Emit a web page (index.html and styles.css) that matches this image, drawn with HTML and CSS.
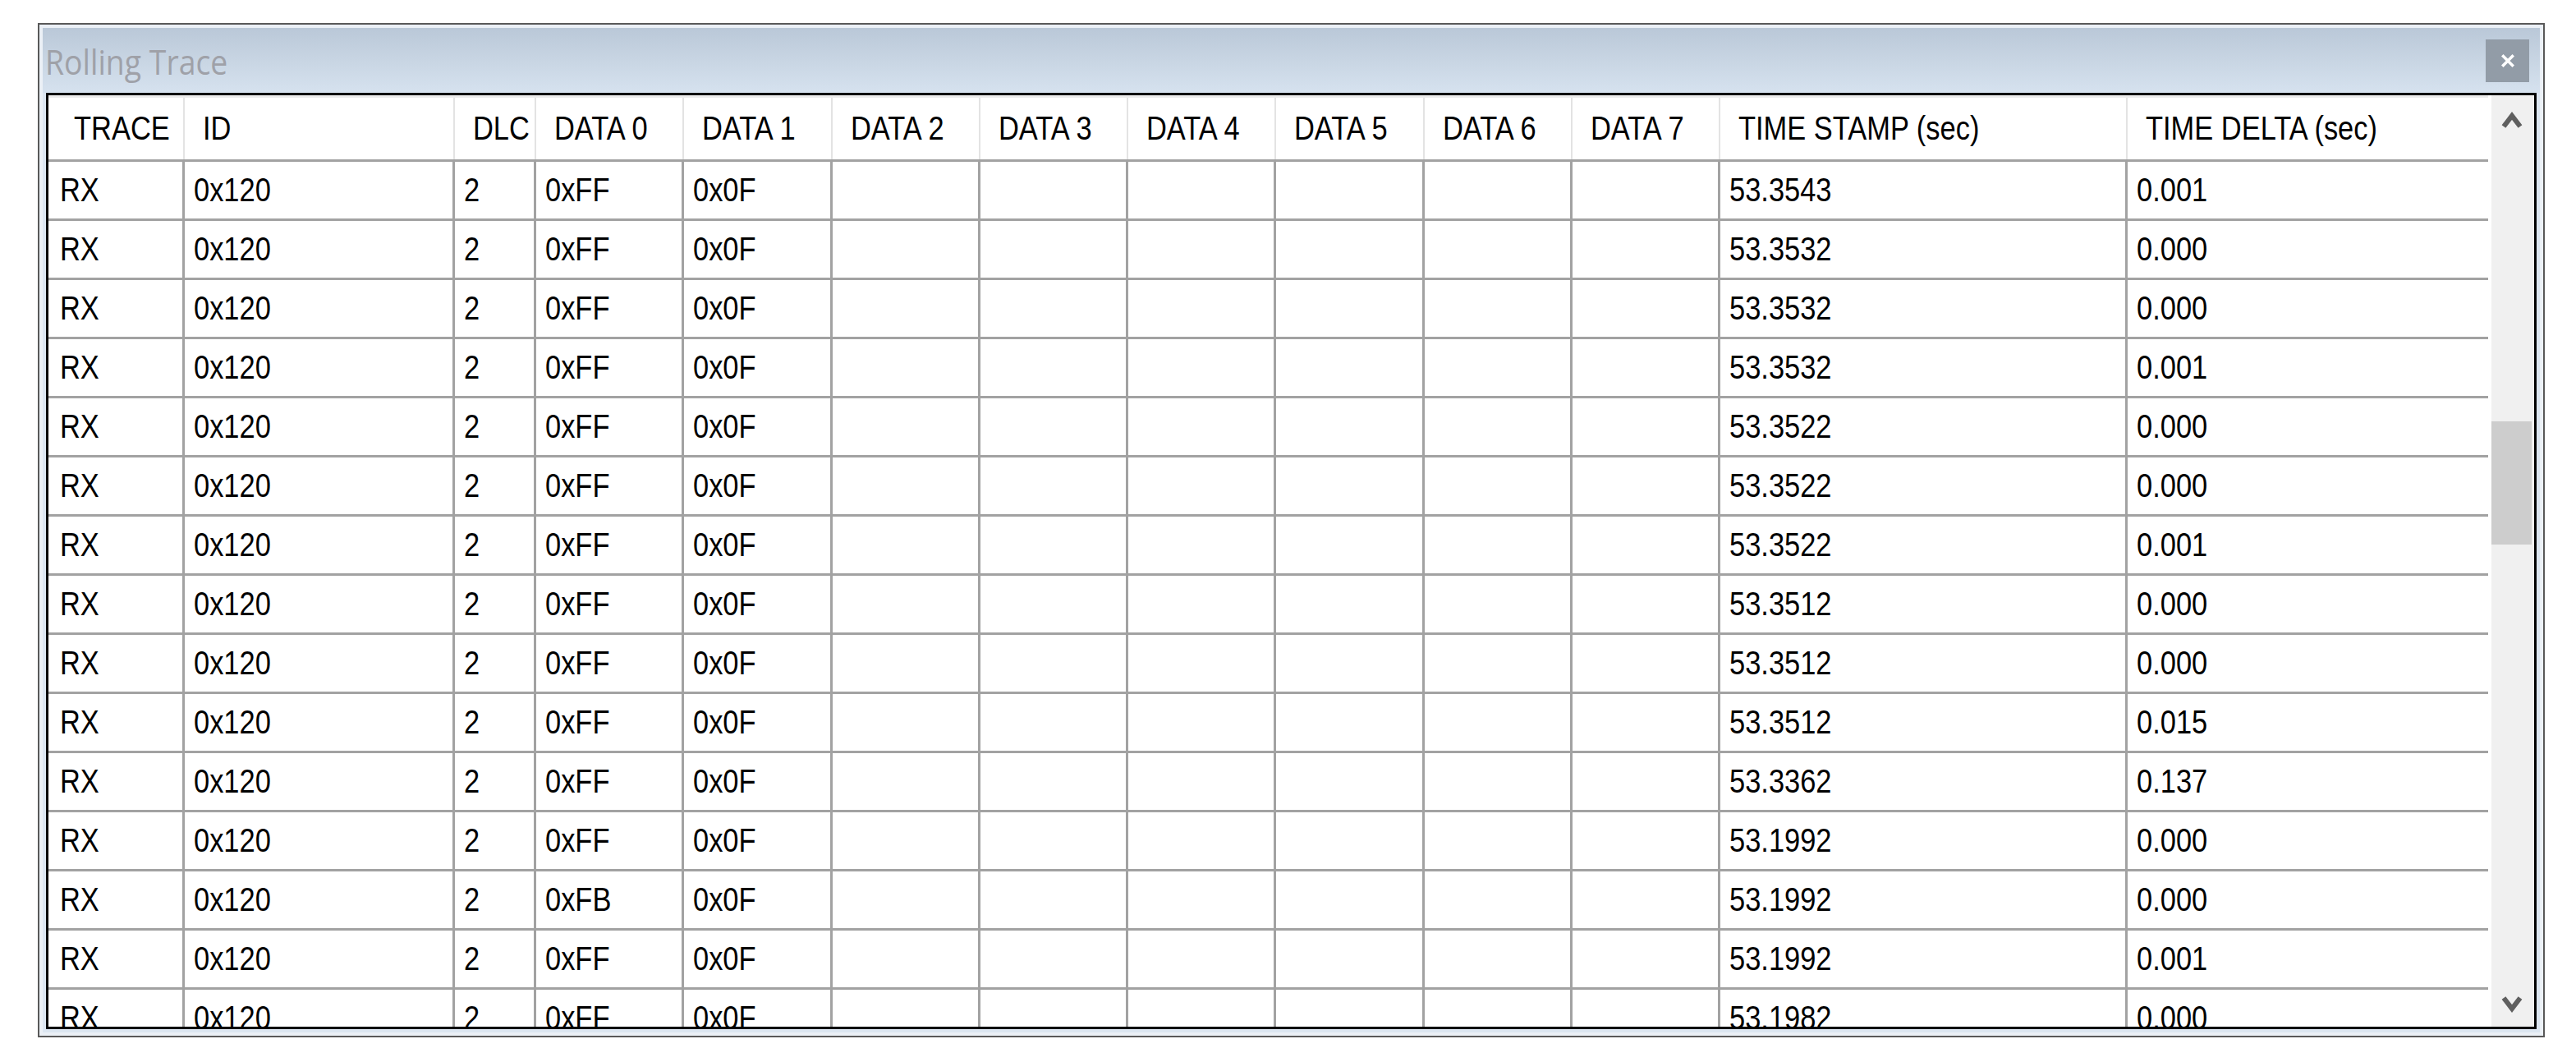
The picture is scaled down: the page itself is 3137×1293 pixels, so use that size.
FILE: index.html
```html
<!DOCTYPE html>
<html>
<head>
<meta charset="utf-8">
<title>Rolling Trace</title>
<link rel="stylesheet" href="styles.css">
</head>
<body>
<div class="window">
  <div class="titlebar">
    <span class="title">Rolling Trace</span>
    <div class="close">
      <svg width="18" height="18" viewBox="0 0 18 18"><path d="M3.5 3.5 L14.5 14.5 M14.5 3.5 L3.5 14.5" stroke="#fff" stroke-width="3.5" stroke-linecap="square" fill="none"/></svg>
    </div>
  </div>
  <div class="panel">
    <div class="grid">
      <div class="row head">
        <div class="h first"><span class="t">TRACE</span></div>
        <div class="h"><span class="t">ID</span></div>
        <div class="h"><span class="t">DLC</span></div>
        <div class="h"><span class="t">DATA 0</span></div>
        <div class="h"><span class="t">DATA 1</span></div>
        <div class="h"><span class="t">DATA 2</span></div>
        <div class="h"><span class="t">DATA 3</span></div>
        <div class="h"><span class="t">DATA 4</span></div>
        <div class="h"><span class="t">DATA 5</span></div>
        <div class="h"><span class="t">DATA 6</span></div>
        <div class="h"><span class="t">DATA 7</span></div>
        <div class="h"><span class="t">TIME STAMP <span class="u">(sec)</span></span></div>
        <div class="h last"><span class="t">TIME DELTA <span class="u">(sec)</span></span></div>
      </div>

      <div class="row">
        <div class="c first"><span class="t">RX</span></div><div class="c"><span class="t">0x120</span></div><div class="c"><span class="t">2</span></div><div class="c"><span class="t">0xFF</span></div><div class="c"><span class="t">0x0F</span></div><div class="c"></div><div class="c"></div><div class="c"></div><div class="c"></div><div class="c"></div><div class="c"></div><div class="c"><span class="t">53.3543</span></div><div class="c last"><span class="t">0.001</span></div>
      </div>
      <div class="row">
        <div class="c first"><span class="t">RX</span></div><div class="c"><span class="t">0x120</span></div><div class="c"><span class="t">2</span></div><div class="c"><span class="t">0xFF</span></div><div class="c"><span class="t">0x0F</span></div><div class="c"></div><div class="c"></div><div class="c"></div><div class="c"></div><div class="c"></div><div class="c"></div><div class="c"><span class="t">53.3532</span></div><div class="c last"><span class="t">0.000</span></div>
      </div>
      <div class="row">
        <div class="c first"><span class="t">RX</span></div><div class="c"><span class="t">0x120</span></div><div class="c"><span class="t">2</span></div><div class="c"><span class="t">0xFF</span></div><div class="c"><span class="t">0x0F</span></div><div class="c"></div><div class="c"></div><div class="c"></div><div class="c"></div><div class="c"></div><div class="c"></div><div class="c"><span class="t">53.3532</span></div><div class="c last"><span class="t">0.000</span></div>
      </div>
      <div class="row">
        <div class="c first"><span class="t">RX</span></div><div class="c"><span class="t">0x120</span></div><div class="c"><span class="t">2</span></div><div class="c"><span class="t">0xFF</span></div><div class="c"><span class="t">0x0F</span></div><div class="c"></div><div class="c"></div><div class="c"></div><div class="c"></div><div class="c"></div><div class="c"></div><div class="c"><span class="t">53.3532</span></div><div class="c last"><span class="t">0.001</span></div>
      </div>
      <div class="row">
        <div class="c first"><span class="t">RX</span></div><div class="c"><span class="t">0x120</span></div><div class="c"><span class="t">2</span></div><div class="c"><span class="t">0xFF</span></div><div class="c"><span class="t">0x0F</span></div><div class="c"></div><div class="c"></div><div class="c"></div><div class="c"></div><div class="c"></div><div class="c"></div><div class="c"><span class="t">53.3522</span></div><div class="c last"><span class="t">0.000</span></div>
      </div>
      <div class="row">
        <div class="c first"><span class="t">RX</span></div><div class="c"><span class="t">0x120</span></div><div class="c"><span class="t">2</span></div><div class="c"><span class="t">0xFF</span></div><div class="c"><span class="t">0x0F</span></div><div class="c"></div><div class="c"></div><div class="c"></div><div class="c"></div><div class="c"></div><div class="c"></div><div class="c"><span class="t">53.3522</span></div><div class="c last"><span class="t">0.000</span></div>
      </div>
      <div class="row">
        <div class="c first"><span class="t">RX</span></div><div class="c"><span class="t">0x120</span></div><div class="c"><span class="t">2</span></div><div class="c"><span class="t">0xFF</span></div><div class="c"><span class="t">0x0F</span></div><div class="c"></div><div class="c"></div><div class="c"></div><div class="c"></div><div class="c"></div><div class="c"></div><div class="c"><span class="t">53.3522</span></div><div class="c last"><span class="t">0.001</span></div>
      </div>
      <div class="row">
        <div class="c first"><span class="t">RX</span></div><div class="c"><span class="t">0x120</span></div><div class="c"><span class="t">2</span></div><div class="c"><span class="t">0xFF</span></div><div class="c"><span class="t">0x0F</span></div><div class="c"></div><div class="c"></div><div class="c"></div><div class="c"></div><div class="c"></div><div class="c"></div><div class="c"><span class="t">53.3512</span></div><div class="c last"><span class="t">0.000</span></div>
      </div>
      <div class="row">
        <div class="c first"><span class="t">RX</span></div><div class="c"><span class="t">0x120</span></div><div class="c"><span class="t">2</span></div><div class="c"><span class="t">0xFF</span></div><div class="c"><span class="t">0x0F</span></div><div class="c"></div><div class="c"></div><div class="c"></div><div class="c"></div><div class="c"></div><div class="c"></div><div class="c"><span class="t">53.3512</span></div><div class="c last"><span class="t">0.000</span></div>
      </div>
      <div class="row">
        <div class="c first"><span class="t">RX</span></div><div class="c"><span class="t">0x120</span></div><div class="c"><span class="t">2</span></div><div class="c"><span class="t">0xFF</span></div><div class="c"><span class="t">0x0F</span></div><div class="c"></div><div class="c"></div><div class="c"></div><div class="c"></div><div class="c"></div><div class="c"></div><div class="c"><span class="t">53.3512</span></div><div class="c last"><span class="t">0.015</span></div>
      </div>
      <div class="row">
        <div class="c first"><span class="t">RX</span></div><div class="c"><span class="t">0x120</span></div><div class="c"><span class="t">2</span></div><div class="c"><span class="t">0xFF</span></div><div class="c"><span class="t">0x0F</span></div><div class="c"></div><div class="c"></div><div class="c"></div><div class="c"></div><div class="c"></div><div class="c"></div><div class="c"><span class="t">53.3362</span></div><div class="c last"><span class="t">0.137</span></div>
      </div>
      <div class="row">
        <div class="c first"><span class="t">RX</span></div><div class="c"><span class="t">0x120</span></div><div class="c"><span class="t">2</span></div><div class="c"><span class="t">0xFF</span></div><div class="c"><span class="t">0x0F</span></div><div class="c"></div><div class="c"></div><div class="c"></div><div class="c"></div><div class="c"></div><div class="c"></div><div class="c"><span class="t">53.1992</span></div><div class="c last"><span class="t">0.000</span></div>
      </div>
      <div class="row">
        <div class="c first"><span class="t">RX</span></div><div class="c"><span class="t">0x120</span></div><div class="c"><span class="t">2</span></div><div class="c"><span class="t">0xFB</span></div><div class="c"><span class="t">0x0F</span></div><div class="c"></div><div class="c"></div><div class="c"></div><div class="c"></div><div class="c"></div><div class="c"></div><div class="c"><span class="t">53.1992</span></div><div class="c last"><span class="t">0.000</span></div>
      </div>
      <div class="row">
        <div class="c first"><span class="t">RX</span></div><div class="c"><span class="t">0x120</span></div><div class="c"><span class="t">2</span></div><div class="c"><span class="t">0xFF</span></div><div class="c"><span class="t">0x0F</span></div><div class="c"></div><div class="c"></div><div class="c"></div><div class="c"></div><div class="c"></div><div class="c"></div><div class="c"><span class="t">53.1992</span></div><div class="c last"><span class="t">0.001</span></div>
      </div>
      <div class="row">
        <div class="c first"><span class="t">RX</span></div><div class="c"><span class="t">0x120</span></div><div class="c"><span class="t">2</span></div><div class="c"><span class="t">0xFF</span></div><div class="c"><span class="t">0x0F</span></div><div class="c"></div><div class="c"></div><div class="c"></div><div class="c"></div><div class="c"></div><div class="c"></div><div class="c"><span class="t">53.1982</span></div><div class="c last"><span class="t">0.000</span></div>
      </div>
    </div>
    <div class="scrollbar">
      <div class="sb-up">
        <svg width="26" height="22" viewBox="0 0 26 22"><polyline points="3,19 13,6 23,19" fill="none" stroke="#5f5f5f" stroke-width="6"/></svg>
      </div>
      <div class="sb-track"><div class="sb-thumb"></div></div>
      <div class="sb-down">
        <svg width="26" height="22" viewBox="0 0 26 22"><polyline points="3,3 13,16 23,3" fill="none" stroke="#5f5f5f" stroke-width="6"/></svg>
      </div>
    </div>
  </div>
</div>
</body>
</html>
```

FILE: styles.css
```css
html, body {
  margin: 0;
  padding: 0;
  background: #ffffff;
}

body {
  font-family: "Liberation Sans", Arial, sans-serif;
}

.window {
  box-sizing: border-box;
  width: 3053px;
  height: 1235px;
  margin: 28px 0 0 46px;
  border: 2px solid #595959;
  background: #dce6f1;
  box-shadow: inset 0 0 0 4px #ebf0f6;
  display: flex;
  flex-direction: column;
}

.titlebar {
  height: 79px;
  margin: 4px 4px 0 4px;
  background: linear-gradient(to bottom, #bac8d8 0%, #c8d5e3 50%, #d6e2ef 100%);
  display: flex;
  align-items: center;
  justify-content: space-between;
  padding-left: 3px;
}

.title {
  font-family: "Open Sans", "Noto Sans", sans-serif;
  font-size: 42px;
  color: #9fa1a8;
  display: inline-block;
  transform: scaleX(0.89);
  transform-origin: 0 50%;
  padding-top: 2px;
  white-space: nowrap;
}

.close {
  width: 53px;
  height: 52px;
  margin-right: 13px;
  background: #929ca7;
  display: flex;
  align-items: center;
  justify-content: center;
}

.close svg {
  display: block;
}

.panel {
  flex: 1;
  margin: 0 8px 8px 8px;
  border: 3px solid #000000;
  background: #ffffff;
  display: flex;
  overflow: hidden;
}

.grid {
  width: 2975px;
  overflow: hidden;
  display: flex;
  flex-direction: column;
}

.row {
  box-sizing: border-box;
  flex: none;
  width: 2971px;
  height: 72px;
  display: grid;
  grid-template-columns: 166px 329px 99px repeat(8, 180.25px) 496px 439px;
  border-bottom: 3px solid #a2a2a2;
}

.row.head {
  height: 81px;
  border-top: 3px solid #ececec;
}

.h, .c {
  box-sizing: border-box;
  display: flex;
  align-items: center;
  overflow: visible;
  font-size: 41px;
  color: #000000;
  white-space: nowrap;
}

.h {
  border-right: 2px solid #e3e3e3;
  padding-left: 22px;
}

.h.first {
  padding-left: 31px;
}

.c {
  border-right: 3px solid #a2a2a2;
  padding-left: 11px;
}

.c.first {
  padding-left: 14px;
}

.h.last, .c.last {
  border-right: none;
}

.t {
  display: inline-block;
  transform: scaleX(0.84);
  transform-origin: 0 50%;
}

.u {
  font-size: 1em;
}

.scrollbar {
  width: 52px;
  background: #f0f0f0;
  display: flex;
  flex-direction: column;
}

.sb-up {
  height: 60px;
  display: flex;
  align-items: center;
  justify-content: center;
  padding-right: 3px;
}

.sb-track {
  flex: 1;
}

.sb-thumb {
  width: 49px;
  height: 150px;
  margin-top: 337px;
  background: #cdcdcd;
}

.sb-down {
  height: 54px;
  display: flex;
  align-items: center;
  justify-content: center;
  padding-right: 3px;
}

.sb-up svg, .sb-down svg {
  display: block;
}
```
